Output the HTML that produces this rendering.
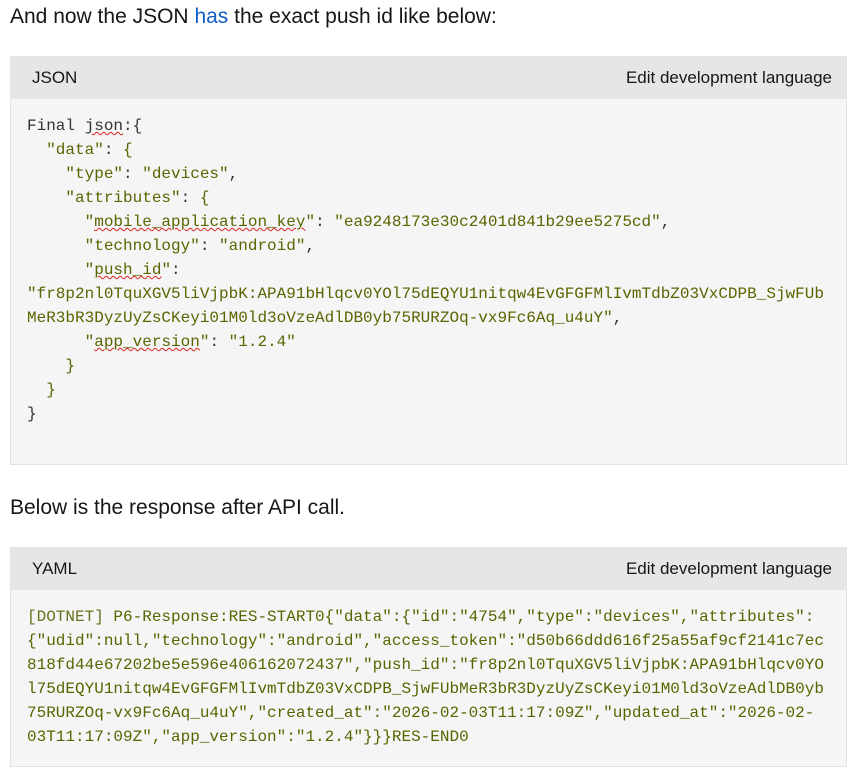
<!DOCTYPE html>
<html><head><meta charset="utf-8"><style>
body{margin:0;background:#fff;width:857px;height:777px;overflow:hidden;font-family:"Liberation Sans",sans-serif;}
.p{position:absolute;left:10px;font-size:21px;color:#161616;}
.box{position:absolute;left:10px;width:835px;border:1px solid #e3e3e3;background:#f5f5f5;}
.hd{height:42px;background:#e6e6e6;font-size:17px;color:#161616;position:relative;}
.hd .l{position:absolute;left:21px;top:11px;}
.hd .r{position:absolute;right:14px;top:11px;}
pre{margin:0;padding:0 0 0 16px;font-family:"Liberation Mono",monospace;font-size:16px;line-height:24px;color:#333;}
.s{color:#5b6400;}
.w{text-decoration:underline wavy #e02020;text-decoration-thickness:1px;}
</style></head><body>
<div class="p" style="top:5px">And now the JSON <span style="color:#0f5ec8">has</span> the exact push id like below:</div>
<div class="box" style="top:56px;height:407px">
<div class="hd"><span class="l">JSON</span><span class="r">Edit development language</span></div>
<pre style="padding-top:15px">Final <span class="w">json</span>:{
  <span class="s">"data"</span>: <span class="s">{</span>
    <span class="s">"type"</span>: <span class="s">"devices"</span>,
    <span class="s">"attributes"</span>: <span class="s">{</span>
      <span class="s">"<span class="w">mobile_application_key</span>"</span>: <span class="s">"ea9248173e30c2401d841b29ee5275cd"</span>,
      <span class="s">"technology"</span>: <span class="s">"android"</span>,
      <span class="s">"<span class="w">push_id</span>"</span>:
<span class="s">"fr8p2nl0TquXGV5liVjpbK:APA91bHlqcv0YOl75dEQYU1nitqw4EvGFGFMlIvmTdbZ03VxCDPB_SjwFUb
MeR3bR3DyzUyZsCKeyi01M0ld3oVzeAdlDB0yb75RURZOq-vx9Fc6Aq_u4uY"</span>,
      <span class="s">"<span class="w">app_version</span>"</span>: <span class="s">"1.2.4"</span>
    <span class="s">}</span>
  <span class="s">}</span>
}</pre>
</div>
<div class="p" style="top:496px">Below is the response after API call.</div>
<div class="box" style="top:547px;height:218px">
<div class="hd"><span class="l">YAML</span><span class="r">Edit development language</span></div>
<pre class="s" style="padding-top:15px"><span style="color:#6b7020">[DOTNET]</span> P6-Response:RES-START0{"data":{"id":"4754","type":"devices","attributes":
{"udid":null,"technology":"android","access_token":"d50b66ddd616f25a55af9cf2141c7ec
818fd44e67202be5e596e406162072437","push_id":"fr8p2nl0TquXGV5liVjpbK:APA91bHlqcv0YO
l75dEQYU1nitqw4EvGFGFMlIvmTdbZ03VxCDPB_SjwFUbMeR3bR3DyzUyZsCKeyi01M0ld3oVzeAdlDB0yb
75RURZOq-vx9Fc6Aq_u4uY","created_at":"2026-02-03T11:17:09Z","updated_at":"2026-02-
03T11:17:09Z","app_version":"1.2.4"}}}RES-END0</pre>
</div>
</body></html>
